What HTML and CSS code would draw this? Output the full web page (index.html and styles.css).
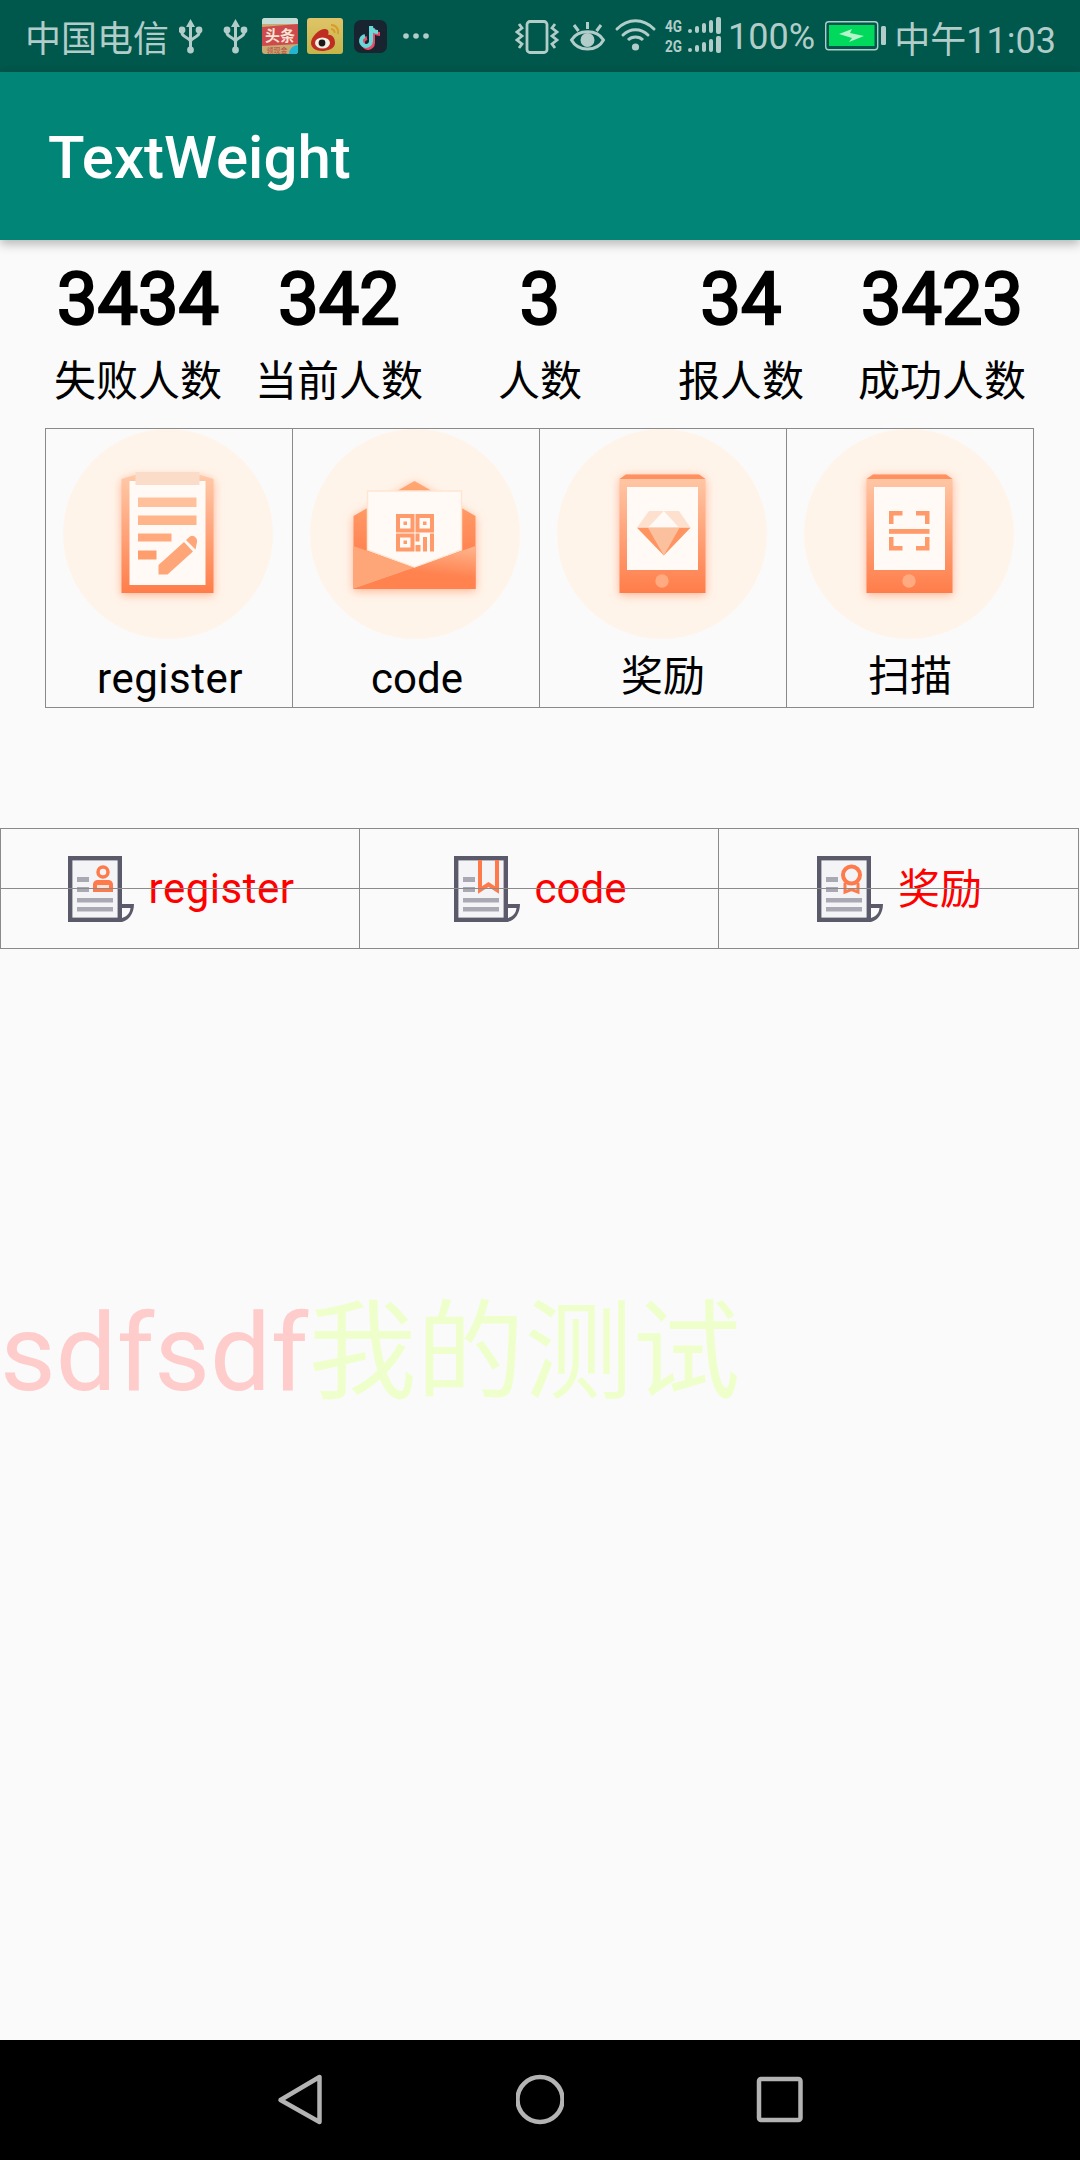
FILE: index.html
```html
<!DOCTYPE html>
<html lang="zh-CN">
<head>
    <meta charset="UTF-8">
    <meta name="viewport" content="width=device-width, initial-scale=1.0">
    <title>TextWeight</title>
    <link rel="stylesheet" href="styles.css">
</head>
<body>
    <!-- shared gradients and icon parts -->
    <svg class="sprite" width="0" height="0">
        <defs>
            <linearGradient id="orangeV" x1="0" y1="0" x2="0" y2="1">
                <stop offset="0" stop-color="#ffc9a8"/>
                <stop offset="1" stop-color="#ff7d4a"/>
            </linearGradient>
            <linearGradient id="orangeBack" x1="0" y1="0" x2="0" y2="1">
                <stop offset="0" stop-color="#ffa873"/>
                <stop offset="1" stop-color="#ff7040"/>
            </linearGradient>
            <linearGradient id="orangeFront" x1="1" y1="0" x2="0.7" y2="1">
                <stop offset="0" stop-color="#ffb68f"/>
                <stop offset="0.7" stop-color="#ff824f"/>
            </linearGradient>
            <linearGradient id="weiboBg" x1="0" y1="0" x2="0" y2="1">
                <stop offset="0" stop-color="#e0c468"/>
                <stop offset="1" stop-color="#c4b549"/>
            </linearGradient>
            <symbol id="tablet" viewBox="0 0 210 210">
                <circle cx="105" cy="105" r="105" fill="#fff4ea"/>
                <g class="glow">
                    <path d="M62.5 50 L69 45.5 H142 L148.5 50 V164 H62.5 Z" fill="url(#orangeV)"/>
                    <path d="M62.5 50 L69 45.5 H142 L148.5 50 Z" fill="#ff9160"/>
                    <rect x="70" y="58" width="71" height="83" fill="#fffaf6"/>
                    <circle cx="105" cy="152" r="6.7" fill="#ffaa80"/>
                </g>
            </symbol>
            <symbol id="doc" viewBox="0 0 66 66">
                <rect x="2.2" y="2.2" width="49.6" height="61.6" fill="#f4f4f7" stroke="#5a5a6b" stroke-width="4.4"/>
                <path d="M54 48 H66 C66 58 60 66 52 66 H50 V60 H54 Z" fill="#5a5a6b"/>
                <path d="M54 52 H62.5 C62 57 59 60.5 54 62 Z" fill="#fafafa"/>
                <rect x="9" y="21" width="12" height="5" fill="#a9a9b3"/>
                <rect x="9" y="31" width="12" height="5" fill="#a9a9b3"/>
                <rect x="9" y="42" width="36" height="4.5" fill="#a9a9b3"/>
                <rect x="9" y="51" width="36" height="4.5" fill="#a9a9b3"/>
            </symbol>
        </defs>
    </svg>

    <div class="page">
        <header class="status-bar">
            <span class="carrier">中国电信</span>
            <svg class="notif-icons" width="250" height="38" viewBox="179 17 250 38">
                <g fill="#b2cdc9" stroke="#b2cdc9" stroke-width="3">
                    <path d="M190.5 26 V50 M182 28 V33 C182 37 190.5 38 190.5 42 M199 28 V33 C199 37 190.5 38 190.5 42" fill="none"/>
                    <path d="M190.5 19 L195 27 H186 Z" stroke="none"/>
                    <circle cx="182" cy="30" r="3.4" stroke="none"/>
                    <circle cx="199" cy="30" r="3.4" stroke="none"/>
                    <circle cx="190.5" cy="50" r="3.4" stroke="none"/>
                    <path d="M235.5 26 V50 M227 28 V33 C227 37 235.5 38 235.5 42 M244 28 V33 C244 37 235.5 38 235.5 42" fill="none"/>
                    <path d="M235.5 19 L240 27 H231 Z" stroke="none"/>
                    <circle cx="227" cy="30" r="3.4" stroke="none"/>
                    <circle cx="244" cy="30" r="3.4" stroke="none"/>
                    <circle cx="235.5" cy="50" r="3.4" stroke="none"/>
                </g>
                <!-- toutiao -->
                <rect x="262" y="18" width="36" height="36" rx="3" fill="#c7ab72"/>
                <path d="M262 21 a3 3 0 0 1 3 -3 h30 a3 3 0 0 1 3 3 v3 H262 Z" fill="#c4dcd5"/>
                <path d="M262 27 L298 24 V44 L262 46 Z" fill="#cf4a4c"/>
                <text class="tt-title" x="280" y="41" text-anchor="middle">头条</text>
                <text class="tt-small" x="277" y="52.5" text-anchor="middle">领现金</text>
                <path d="M298 45 V51 a3 3 0 0 1 -3 3 h-6 a9 9 0 0 1 9 -9 Z" fill="#1fb6d3"/>
                <!-- weibo -->
                <rect x="307" y="18" width="36" height="36" rx="3" fill="url(#weiboBg)"/>
                <path d="M335 43 C335 49 327 51 322 51 C316 51 311 48 311 43 C311 37 319 29 325 29 C329 29 329 33 328 35 C332 34 335 38 335 43 Z" fill="#bf2c22"/>
                <ellipse cx="322.5" cy="43" rx="7.5" ry="5.5" fill="#f6efe4"/>
                <circle cx="322" cy="43" r="3.4" fill="#1d1a18"/>
                <path d="M331 25 C336 25 339 29 338 34 M331 29 C333 29 335 31 334.5 33" fill="none" stroke="#d99a2c" stroke-width="2"/>
                <!-- tiktok -->
                <rect x="354" y="20" width="33" height="33" rx="7" fill="#182430"/>
                <path class="tk-stroke" d="M372 27 V42 A5 5 0 1 1 366 37" stroke="#e84a68" transform="translate(1 1)"/>
                <path class="tk-stroke" d="M372 27 C372 31 375 33 379 33" stroke="#e84a68" transform="translate(1 1)"/>
                <path class="tk-stroke" d="M372 27 V42 A5 5 0 1 1 366 37" stroke="#64dbd8" transform="translate(-1 -1)"/>
                <path class="tk-stroke" d="M372 27 C372 31 375 33 379 33" stroke="#64dbd8" transform="translate(-1 -1)"/>
                <circle cx="406" cy="36" r="2.8" fill="#b2cdc9"/>
                <circle cx="416" cy="36" r="2.8" fill="#b2cdc9"/>
                <circle cx="426" cy="36" r="2.8" fill="#b2cdc9"/>
            </svg>
            <svg class="sys-icons" width="207" height="48" viewBox="515 12 207 48">
                <g fill="none" stroke="#b2cdc9" stroke-width="2.8">
                    <rect x="527" y="21.5" width="20" height="31" rx="3"/>
                    <path d="M519 24 L522 28 L517 32 L522 36 L517 40 L522 44 L519 48"/>
                    <path d="M555 24 L552 28 L557 32 L552 36 L557 40 L552 44 L555 48"/>
                    <path d="M571.500 40 C578 29 597 29 603.500 40 C597 52 578 52 571.500 40 Z" stroke-width="3"/>
                    <path d="M587.500 22 V29 M574 25 L578.500 31 M601 25 L596.500 31" stroke-width="3"/>
                    <path d="M617 29 C628 18 643 18 654 29 M623 35 C630 28 641 28 648 35" stroke-width="3" stroke-linecap="round"/>
                </g>
                <circle cx="587.5" cy="40" r="7" fill="#b2cdc9"/>
                <circle cx="635.5" cy="47" r="3.6" fill="#b2cdc9"/>
                <path d="M628 40 C632 36 639 36 643 40" fill="none" stroke="#b2cdc9" stroke-width="3"/>
                <text class="net-label" x="665" y="32" textLength="17" lengthAdjust="spacingAndGlyphs">4G</text>
                <text class="net-label" x="665" y="52" textLength="17" lengthAdjust="spacingAndGlyphs">2G</text>
                <g fill="#b2cdc9">
                    <rect x="688" y="29" width="4" height="4" rx="2"/>
                    <rect x="695" y="26" width="4" height="7" rx="2"/>
                    <rect x="702" y="23" width="4" height="10" rx="2"/>
                    <rect x="709" y="20" width="4" height="13" rx="2"/>
                    <rect x="716" y="17" width="5" height="17" rx="2"/>
                    <rect x="688" y="48" width="4" height="4" rx="2"/>
                    <rect x="695" y="45" width="4" height="7" rx="2"/>
                    <rect x="702" y="42" width="4" height="10" rx="2"/>
                    <rect x="709" y="39" width="4" height="13" rx="2"/>
                    <rect x="716" y="36" width="5" height="17" rx="2"/>
                </g>
            </svg>
            <span class="battery-text">100%</span>
            <svg class="battery" width="61" height="30" viewBox="824 23 61 30">
                <rect x="824.7" y="23.7" width="52" height="28" rx="3" fill="none" stroke="#b2cdc9" stroke-width="1.4"/>
                <rect x="828" y="27" width="45.5" height="21" fill="#00d95c"/>
                <rect x="880" y="28" width="5" height="19" rx="1.5" fill="#b2cdc9"/>
                <path d="M838 36 L851 31 L849 35 L863 38 L848 44 L851 40 Z" fill="#b6f5cb"/>
            </svg>
            <span class="clock">中午11:03</span>
        </header>

        <div class="app-bar">TextWeight</div>

        <main class="content">
            <section class="stats">
                <div class="stat"><div class="stat-num">3434</div><div class="stat-label">失败人数</div></div>
                <div class="stat"><div class="stat-num">342</div><div class="stat-label">当前人数</div></div>
                <div class="stat"><div class="stat-num">3</div><div class="stat-label">人数</div></div>
                <div class="stat"><div class="stat-num">34</div><div class="stat-label">报人数</div></div>
                <div class="stat"><div class="stat-num">3423</div><div class="stat-label">成功人数</div></div>
            </section>

            <section class="menu-grid">
                <div class="menu-cell">
                    <svg class="menu-icon" width="210" height="210" viewBox="0 0 210 210">
                        <circle cx="105" cy="105" r="105" fill="#fff4ea"/>
                        <g class="glow">
                            <path d="M58.5 50 L72 46 H137 L150.5 50 V164 H58.5 Z" fill="url(#orangeV)"/>
                            <rect x="66.5" y="52" width="76" height="104" fill="#fffaf6"/>
                        </g>
                        <rect x="72.5" y="43" width="64" height="13" fill="#fbdcc9"/>
                        <rect x="75" y="68.5" width="58.5" height="9.5" fill="#ffc09b"/>
                        <rect x="75" y="86.5" width="58.5" height="9.5" fill="#ffb48a"/>
                        <rect x="75" y="104.5" width="33.5" height="8" fill="#ffa97c"/>
                        <rect x="75" y="121.5" width="18.5" height="9" fill="#ff9e6d"/>
                        <path d="M95.5 136 V145.5 H104.5 L130 122.5 L121 113 Z" fill="#ffa679"/>
                        <path d="M123 111 L127 107.5 C130 105 135 109 134 113 L132.5 120.5 Z" fill="#ffa679"/>
                    </svg>
                    <span class="menu-text menu-latin wide">register</span>
                </div>
                <div class="menu-cell">
                    <svg class="menu-icon" width="210" height="210" viewBox="0 0 210 210">
                        <circle cx="105" cy="105" r="105" fill="#fff4ea"/>
                        <g class="glow">
                            <path d="M43.5 160 V87 L104.5 52 L165.5 87 V160 Z" fill="url(#orangeBack)"/>
                        </g>
                        <path d="M57.5 62 H151.5 V121 L104.5 138.5 L57.5 121 Z" fill="#fffaf6" stroke="#ffe6d2" stroke-width="1.5"/>
                        <g fill="#ff9a6b">
                            <rect x="86" y="85" width="18.5" height="18.5"/>
                            <rect x="105.5" y="85" width="18.5" height="18.5"/>
                            <rect x="86" y="104.5" width="18.5" height="18"/>
                            <rect x="105.5" y="104.5" width="4" height="8"/>
                            <rect x="105.5" y="116" width="5" height="6.5"/>
                            <rect x="113" y="108" width="4" height="14.5"/>
                            <rect x="120" y="104.5" width="4" height="18"/>
                        </g>
                        <g fill="#fffaf6">
                            <rect x="90" y="89" width="10.5" height="10.5"/>
                            <rect x="109.5" y="89" width="10.5" height="10.5"/>
                            <rect x="90" y="108.5" width="10.5" height="10"/>
                        </g>
                        <g fill="#ff9a6b">
                            <rect x="93.5" y="92.5" width="3.5" height="3.5"/>
                            <rect x="113" y="92.5" width="3.5" height="3.5"/>
                            <rect x="93.5" y="111.5" width="3.5" height="3.5"/>
                        </g>
                        <path d="M43.5 117 L104.5 138.7 L43.5 160 Z" fill="#ffa678"/>
                        <path d="M165.5 117 V160 H43.5 L104.5 138.7 Z" fill="url(#orangeFront)"/>
                    </svg>
                    <span class="menu-text menu-latin">code</span>
                </div>
                <div class="menu-cell">
                    <svg class="menu-icon" width="210" height="210" viewBox="0 0 210 210">
                        <use href="#tablet"/>
                        <path d="M92 82 H122 L133.5 98.7 H80 Z" fill="#fde0cd"/>
                        <path d="M106.8 82 L122.2 98.7 H90.8 Z" fill="#fffaf6"/>
                        <path d="M80 98.7 H133.5 L106.8 126.5 Z" fill="#ff9460"/>
                        <path d="M91 98.7 H122.5 L106.8 126.5 Z" fill="#fbc09d"/>
                    </svg>
                    <span class="menu-text">奖励</span>
                </div>
                <div class="menu-cell">
                    <svg class="menu-icon" width="210" height="210" viewBox="0 0 210 210">
                        <use href="#tablet"/>
                        <path d="M85 95 V82 H98.5 V86.500 H89.5 V95 Z M112 82 H125.5 V95 H121 V86.500 H112 Z M85 108 H89.5 V117 H98.5 V121.5 H85 Z M121 108 H125.5 V121.5 H112 V117 H121 Z" fill="#ff9a6b"/>
                        <rect x="85" y="100" width="40.5" height="4.8" fill="#ff9a6b"/>
                    </svg>
                    <span class="menu-text">扫描</span>
                </div>
            </section>

            <section class="tab-row">
                <div class="tab">
                    <svg class="tab-icon" width="66" height="66" viewBox="0 0 66 66">
                        <use href="#doc"/>
                        <circle cx="35" cy="16" r="5" fill="none" stroke="#ff7a4a" stroke-width="3.5"/>
                        <path d="M25 36 V29 C25 25.500 27 24 30 24 H40 C43 24 45 25.500 45 29 V36 Z" fill="#ff7a4a"/>
                        <rect x="29" y="29" width="12" height="3" fill="#fbe3d8"/>
                    </svg>
                    <span class="wide">register</span>
                </div>
                <div class="tab">
                    <svg class="tab-icon" width="66" height="66" viewBox="0 0 66 66">
                        <use href="#doc"/>
                        <path d="M26 4 V34 L34.500 28.500 L43 34 V4" fill="none" stroke="#ff7a4a" stroke-width="4"/>
                    </svg>
                    <span>code</span>
                </div>
                <div class="tab">
                    <svg class="tab-icon" width="66" height="66" viewBox="0 0 66 66">
                        <use href="#doc"/>
                        <circle cx="34.500" cy="19" r="8.500" fill="none" stroke="#ff7a4a" stroke-width="4"/>
                        <path d="M28 27 V36 L34.500 33.500 L41 36 V27" fill="none" stroke="#ff7a4a" stroke-width="3"/>
                    </svg>
                    <span class="tab-cjk">奖励</span>
                </div>
                <div class="tab-line"></div>
            </section>

            <p class="big-text"><span class="big-latin">sdfsdf</span><span class="big-cjk">我的测试</span></p>
        </main>

        <footer class="nav-bar">
            <svg width="48" height="54" viewBox="0 0 48 54">
                <path d="M4.500 27 L43.500 4 V49 Z" class="nav-stroke"/>
            </svg>
            <svg width="48" height="54" viewBox="0 0 48 54">
                <circle cx="24" cy="26.500" r="22.500" class="nav-stroke"/>
            </svg>
            <svg width="48" height="54" viewBox="0 0 48 54">
                <rect x="3" y="6" width="41.500" height="41" rx="2" class="nav-stroke"/>
            </svg>
        </footer>
    </div>
</body>
</html>
```

FILE: styles.css
```css
html,
body {
    margin: 0;
    padding: 0;
}

body {
    font-family: Roboto, "Noto Sans CJK SC", sans-serif;
    background: #fafafa;
}

.sprite {
    display: block;
}

.page {
    display: flex;
    flex-direction: column;
    width: 1080px;
    height: 2160px;
    overflow: hidden;
}

/* status bar */
.status-bar {
    display: flex;
    align-items: center;
    flex: none;
    height: 72px;
    padding: 0 24px 0 25px;
    background: #00574b;
    color: #b2cdc9;
    font-size: 36px;
}

.carrier {
    width: 154px;
}

.notif-icons,
.sys-icons,
.battery {
    flex: none;
}

.sys-icons {
    margin-left: 86px;
}

.battery-text {
    margin: 2px 0 0 6px;
}

.battery {
    margin-left: 10px;
}

.clock {
    margin: 1px 0 0 auto;
}

.tt-title {
    font-size: 15px;
    font-weight: 700;
    fill: #f6e3d4;
}

.tt-small {
    font-size: 7px;
    fill: #b8443f;
}

.tk-stroke {
    fill: none;
    stroke-width: 4;
}

.net-label {
    font-size: 16px;
    font-weight: 700;
    fill: #b2cdc9;
}

/* app bar */
.app-bar {
    position: relative;
    z-index: 1;
    flex: none;
    height: 168px;
    padding-left: 48px;
    background: #008577;
    color: #ffffff;
    font-size: 60px;
    font-weight: 500;
    line-height: 172px;
    box-shadow: 0 4px 10px rgba(0, 0, 0, 0.28);
}

.content {
    flex: 1;
}

/* stats */
.stats {
    display: grid;
    grid-template-columns: repeat(5, 201px);
    padding: 18px 0 0 37.5px;
}

.stat {
    text-align: center;
    color: #000000;
}

/* regular weight thickened by a stroke, like the fake bold in the shot */
.stat-num {
    font-size: 72px;
    font-weight: 400;
    line-height: 84px;
    -webkit-text-stroke: 2.4px #000000;
}

.stat-label {
    margin-top: 14px;
    font-size: 42px;
    line-height: 52px;
}

/* icon grid */
.menu-grid {
    display: grid;
    grid-template-columns: repeat(4, 247px);
    width: 988px;
    height: 278px;
    margin: 20px 0 0 45px;
    border: 1px solid #8a8a8a;
    border-left: none;
}

.menu-cell {
    display: flex;
    flex-direction: column;
    align-items: center;
    border-left: 1px solid #8a8a8a;
    color: #000000;
}

.menu-icon {
    display: block;
    flex: none;
    margin-right: 2px;
}

.glow {
    filter: drop-shadow(0 2px 5px rgba(255, 125, 74, 0.55));
}

.menu-text {
    margin-top: 12px;
    font-size: 42px;
    line-height: 52px;
}

.menu-latin {
    margin: 14px 0 0 2px;
}

.wide {
    letter-spacing: 0.5px;
}

/* tab row */
.tab-row {
    position: relative;
    display: grid;
    grid-template-columns: 359px 359px 360px;
    width: 1078px;
    height: 119px;
    margin-top: 120px;
    border: 1px solid #8a8a8a;
    border-left: none;
}

.tab {
    display: flex;
    align-items: center;
    justify-content: center;
    gap: 15px;
    padding-left: 2px;
    border-left: 1px solid #8a8a8a;
    color: #ff0000;
    font-size: 42px;
}

.tab-icon {
    flex: none;
}

.tab-cjk {
    margin-bottom: 6px;
}

.tab-line {
    position: absolute;
    top: 59px;
    left: 0;
    right: 0;
    height: 1px;
    background: #8a8a8a;
}

/* large faint text */
.big-text {
    margin: 341px 0 0;
    font-size: 108px;
    line-height: 126px;
}

.big-latin {
    color: #ffcccc;
}

.big-cjk {
    color: #eeffcc;
}

/* navigation */
.nav-bar {
    display: flex;
    align-items: center;
    justify-content: center;
    gap: 192px;
    flex: none;
    height: 120px;
    background: #000000;
}

.nav-stroke {
    fill: none;
    stroke: #b3b3b3;
    stroke-width: 4.5;
    stroke-linejoin: round;
}
```
